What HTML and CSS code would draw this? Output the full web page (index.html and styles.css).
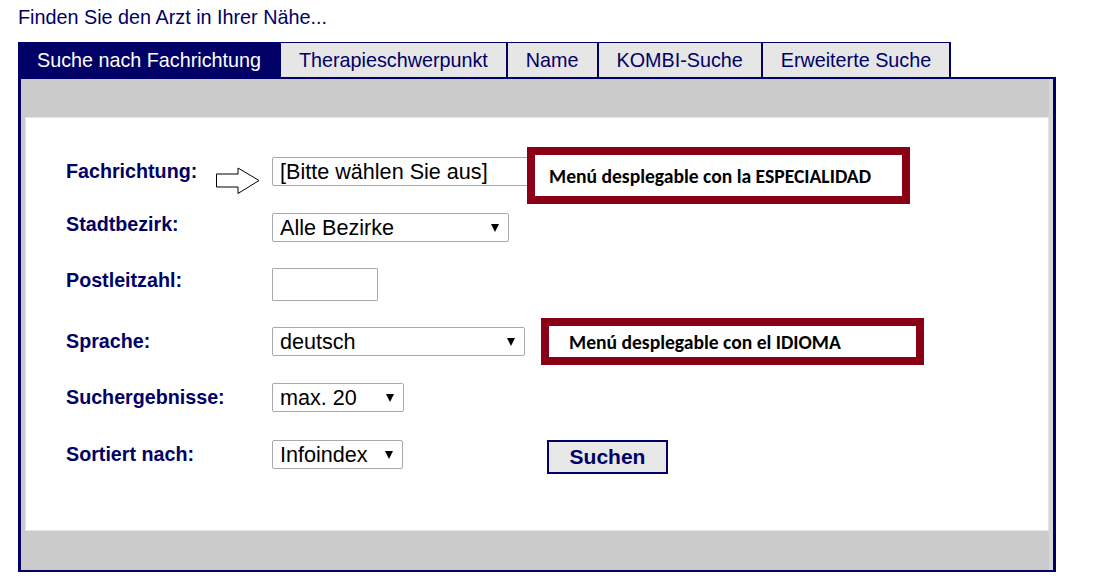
FILE: index.html
```html
<!DOCTYPE html>
<html lang="de">

<head>
    <meta charset="UTF-8">
    <meta name="viewport" content="width=device-width, initial-scale=1.0">
    <title>Arztsuche</title>
    <link rel="stylesheet" href="styles.css">
</head>

<body>
    <div class="intro">Finden Sie den Arzt in Ihrer Nähe...</div>

    <div class="finder">
        <ul class="tabs">
            <li class="tab active">Suche nach Fachrichtung</li>
            <li class="tab">Therapieschwerpunkt</li>
            <li class="tab">Name</li>
            <li class="tab">KOMBI-Suche</li>
            <li class="tab">Erweiterte Suche</li>
        </ul>

        <div class="panel">
            <div class="panel-body">
                <form class="search-form">
                    <div class="row">
                        <label for="fach">Fachrichtung:</label>
                        <span class="select-wrap fach">
                            <select id="fach"><option>[Bitte wählen Sie aus]</option></select>
                        </span>
                    </div>
                    <div class="row">
                        <label for="bezirk" class="up">Stadtbezirk:</label>
                        <span class="select-wrap bezirk">
                            <select id="bezirk"><option>Alle Bezirke</option></select>
                        </span>
                    </div>
                    <div class="row">
                        <label for="plz" class="up">Postleitzahl:</label>
                        <input type="text" id="plz" class="plz">
                    </div>
                    <div class="row">
                        <label for="sprache">Sprache:</label>
                        <span class="select-wrap sprache">
                            <select id="sprache"><option>deutsch</option></select>
                        </span>
                    </div>
                    <div class="row">
                        <label for="max">Suchergebnisse:</label>
                        <span class="select-wrap max">
                            <select id="max"><option>max. 20</option></select>
                        </span>
                    </div>
                    <div class="row">
                        <label for="sort">Sortiert nach:</label>
                        <span class="select-wrap sort">
                            <select id="sort"><option>Infoindex</option></select>
                        </span>
                        <button type="button" class="btn-search">Suchen</button>
                    </div>
                </form>

                <!-- annotations -->
                <svg class="hint-arrow" width="46" height="28" viewBox="0 0 46 28">
                    <polygon points="1.5,7 23,7 23,1 44,13.5 23,26.5 23,20 1.5,20" fill="#fff" stroke="#000" stroke-width="1"/>
                </svg>
                <div class="note note-fach">Menú desplegable con la ESPECIALIDAD</div>
                <div class="note note-lang">Menú desplegable con el IDIOMA</div>
            </div>
        </div>
    </div>
</body>

</html>
```

FILE: styles.css
```css
body {
    margin: 0;
    font-family: "Liberation Sans", Arial, sans-serif;
    background: #fff;
}

.intro {
    padding: 6px 0 0 18px;
    line-height: 22px;
    font-size: 19.8px;
    color: #000066;
    margin-bottom: 14px;
}

.finder {
    margin-left: 18px;
    width: 1038px;
}

.tabs {
    list-style: none;
    margin: 0;
    padding: 0;
    display: flex;
}

.tab {
    height: 35px;
    box-sizing: border-box;
    line-height: 34px;
    padding: 0 18px;
    font-size: 19.75px;
    color: #000066;
    background: #e6e6e6;
    border-top: 1px solid #000066;
    border-right: 2px solid #000066;
}

.tab.active {
    background: #000066;
    color: #fff;
    border-left: 1px solid #000066;
}

.panel {
    box-sizing: border-box;
    border: 2px solid #000066;
    border-left-width: 3px;
    border-right-width: 3px;
    background: #cbcbcb;
    padding: 38px 4px 39px 4px;
    box-shadow: inset -4px 0 0 #d6d6d6;
}

.panel-body {
    position: relative;
    box-sizing: border-box;
    height: 414px;
    background: #fff;
    border: 1px solid #e2e2e2;
    padding: 25px 0 0 40px;
}

.row {
    display: flex;
    align-items: center;
    height: 56.6px;
}

.row label {
    width: 206px;
    flex-shrink: 0;
    font-weight: bold;
    font-size: 19.7px;
    color: #000066;
}

.row label.up {
    margin-top: -7px;
}

.select-wrap {
    position: relative;
    display: inline-block;
}

.select-wrap select {
    appearance: none;
    -webkit-appearance: none;
    box-sizing: border-box;
    width: 100%;
    height: 29px;
    margin: 0;
    padding: 0 0 0 7px;
    border: 1px solid #a9a9a9;
    border-radius: 2px;
    background: #fff;
    color: #000;
    font-family: "Liberation Sans", Arial, sans-serif;
    font-size: 21.6px;
}

.select-wrap::after {
    content: "";
    position: absolute;
    right: 10px;
    top: 11px;
    border-left: 4.5px solid transparent;
    border-right: 4.5px solid transparent;
    border-top: 8px solid #000;
}

.fach { width: 290px; }
.bezirk { width: 237px; }
.sprache { width: 253px; }
.max { width: 132px; }
.sort { width: 131px; }

.plz {
    box-sizing: border-box;
    width: 106px;
    height: 33px;
    margin: 0;
    border: 1px solid #a9a9a9;
    border-radius: 1px;
}

.btn-search {
    box-sizing: border-box;
    width: 121px;
    height: 34px;
    margin: 6px 0 0 144px;
    padding: 0;
    border: 2px solid #000066;
    background: #e8e8e8;
    color: #000066;
    font-family: "Liberation Sans", Arial, sans-serif;
    font-weight: bold;
    font-size: 21px;
}

.hint-arrow {
    position: absolute;
    left: 189px;
    top: 49px;
}

.note {
    position: absolute;
    box-sizing: border-box;
    width: 383px;
    display: flex;
    align-items: center;
    border: 8px solid #8a0016;
    background: #fff;
    color: #000;
    font-family: Carlito, Lato, sans-serif;
    font-weight: bold;
    font-size: 19.6px;
}

.note-fach {
    left: 501px;
    top: 29px;
    height: 57px;
    padding-left: 14px;
}

.note-lang {
    left: 515px;
    top: 200px;
    height: 47px;
    padding-left: 20px;
}
```
